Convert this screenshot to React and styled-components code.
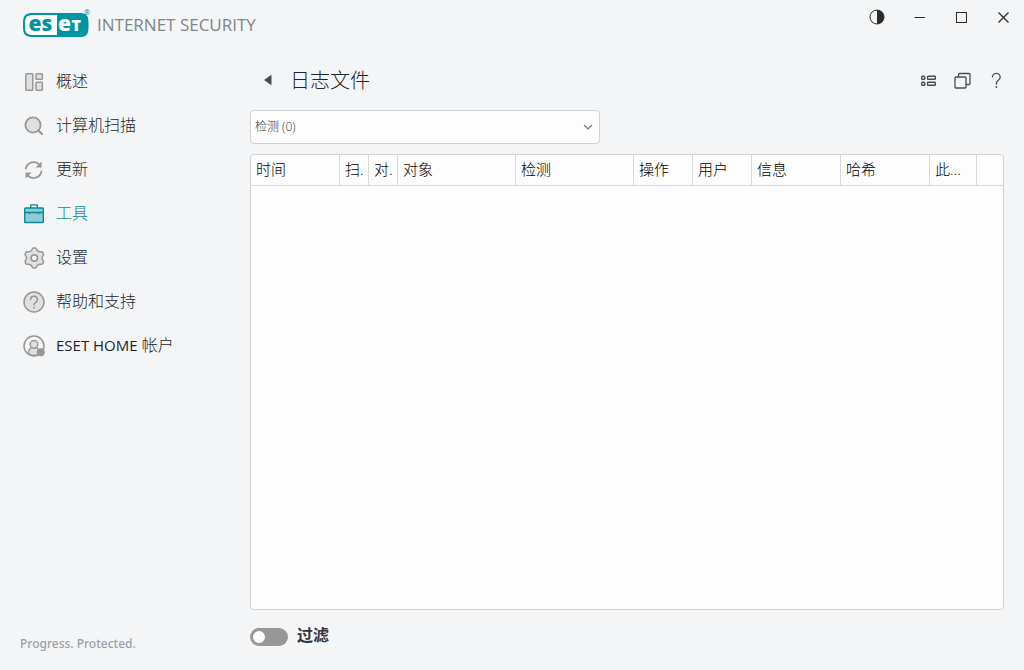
import React from "react";
import styled, { createGlobalStyle, css } from "styled-components";

const GlobalStyle = createGlobalStyle`
  * { box-sizing: border-box; }
  body {
    margin: 0;
    background: #f4f5f7;
    color: #3a3f47;
    font-family: "Open Sans", "Noto Sans CJK SC", sans-serif;
  }
  button { font: inherit; color: inherit; background: none; border: 0; padding: 0; cursor: pointer; }
`;

const Window = styled.div`
  min-height: 100vh;
  display: flex;
  flex-direction: column;
`;

const Header = styled.header`
  height: 50px;
  display: flex;
  justify-content: space-between;
  align-items: flex-start;
`;

const Brand = styled.div`
  display: flex;
  align-items: center;
  gap: 5px;
  padding: 7px 0 0 22px;
`;

const ProductName = styled.span`
  font-family: "Open Sans", sans-serif;
  font-size: 17px;
  line-height: 36px;
  color: #7e868c;
`;

const WindowControls = styled.div`
  display: flex;
`;

const WindowButton = styled.button`
  width: 42px;
  height: 34px;
  display: grid;
  place-items: center;
  color: #2b2b2b;
`;

const Body = styled.div`
  flex: 1;
  display: grid;
  grid-template-columns: 250px minmax(0, 1fr);
`;

const Sidebar = styled.aside`
  display: flex;
  flex-direction: column;
  justify-content: space-between;
  padding: 10px 0 16px 20px;
`;

const Nav = styled.nav`
  display: flex;
  flex-direction: column;
`;

const NavLink = styled.a`
  height: 44px;
  display: flex;
  align-items: center;
  gap: 8px;
  font-size: 16px;
  line-height: 24px;
  font-weight: 300;
  text-decoration: none;
  color: #20262e;
  ${(p) => p.$active && css`color: #0f8a92;`}
`;

const NavLabel = styled.span`
  padding-bottom: 2px;
`;

const Latin = styled.span`
  font-size: 15px;
  font-weight: 400;
`;

const Slogan = styled.p`
  margin: 0;
  font-family: "Noto Sans", sans-serif;
  font-size: 12px;
  line-height: 20px;
  font-weight: 500;
  color: #9a9fa4;
`;

const Main = styled.main`
  display: flex;
  flex-direction: column;
  padding-right: 20px;
`;

const Toolbar = styled.div`
  height: 60px;
  display: flex;
  align-items: center;
  margin-right: -9px;
`;

const BackButton = styled.button`
  width: 36px;
  height: 32px;
  display: grid;
  place-items: center;
`;

const Title = styled.h1`
  flex: 1;
  margin: 0 0 0 4px;
  padding-top: 2px;
  font-size: 20px;
  line-height: 30px;
  font-weight: 300;
  color: #20262e;
`;

const ToolButton = styled.button`
  width: 34px;
  height: 34px;
  display: grid;
  place-items: center;
  color: #43505a;
`;

const SelectBox = styled.div`
  width: 350px;
  max-width: 100%;
  display: grid;
  align-items: center;
  margin-bottom: 10px;
  > * { grid-area: 1 / 1; }
  > svg { justify-self: end; margin-right: 7px; pointer-events: none; }
`;

const LogSelect = styled.select`
  appearance: none;
  width: 100%;
  height: 34px;
  padding: 0 30px 2px 4px;
  border: 1px solid #cfd1d3;
  border-radius: 4px;
  background: #fdfdfd;
  font: 300 12px "Open Sans", "Noto Sans CJK SC", sans-serif;
  color: #333;
`;

const TablePanel = styled.div`
  flex: 1;
  overflow: hidden;
  border: 1px solid #cfd1d3;
  border-radius: 4px;
  background: #fdfdfd;
`;

const LogTable = styled.table`
  width: 100%;
  table-layout: fixed;
  border-collapse: separate;
  border-spacing: 0;
`;

const Column = styled.col`
  width: ${(p) => (p.$width ? `${p.$width}px` : "auto")};
`;

const HeadCell = styled.th`
  height: 31px;
  padding: 0 0 3px 5px;
  overflow: hidden;
  white-space: nowrap;
  text-align: left;
  font-size: 15px;
  line-height: 24px;
  font-weight: 300;
  color: #000;
  border-bottom: 1px solid #d6d8da;
  border-right: 1px solid #d6d8da;
  &:last-child { border-right: 0; }
`;

const FilterRow = styled.label`
  height: 60px;
  align-self: flex-start;
  display: flex;
  align-items: center;
  gap: 9px;
  padding-bottom: 10px;
  font-size: 16px;
  line-height: 24px;
  font-weight: 600;
  color: #333;
`;

const Toggle = styled.input`
  appearance: none;
  width: 38px;
  height: 18px;
  margin: 4px 0 0;
  padding: 3px;
  display: flex;
  border-radius: 9px;
  background: #979797;
  &::before {
    content: "";
    width: 12px;
    height: 12px;
    border-radius: 50%;
    background: #fff;
  }
  &:checked { background: #0096a1; justify-content: flex-end; }
`;

const Icon = ({ size = 28, children, ...rest }) => (
  <svg width={size} height={size} viewBox={`0 0 ${size} ${size}`} fill="none" aria-hidden="true" {...rest}>
    {children}
  </svg>
);

const G = { stroke: "#979797", strokeWidth: 1.8, fill: "#dfe0e2", strokeLinejoin: "round", strokeLinecap: "round" };

const OverviewIcon = () => (
  <Icon>
    <g {...G} strokeWidth="1.5">
      <rect x="5.8" y="5.8" width="7" height="16.4" rx="0.8" />
      <rect x="16" y="5.8" width="6.4" height="5.4" rx="0.8" />
      <rect x="16" y="14.2" width="6.4" height="8" rx="0.8" />
    </g>
  </Icon>
);
const ScanIcon = () => (
  <Icon>
    <circle cx="13" cy="13" r="7.6" {...G} />
    <path d="M18.6 18.6 22 22" {...G} strokeWidth="2.2" />
  </Icon>
);
const UpdateIcon = () => (
  <Icon>
    <g {...G} fill="none">
      <path d="M5.8 12.5A8 8 0 0 1 19.6 8.8" />
      <path d="M21.4 15.5A8 8 0 0 1 7.6 19.4" />
    </g>
    <path d="M21.6 5.6v6h-6z M5.6 22.6v-6h6z" fill="#979797" />
  </Icon>
);
const ToolsIcon = () => (
  <Icon>
    <g stroke="#0f8a92" strokeWidth="1.4" strokeLinejoin="round">
      <path d="M10.7 8V4.900h6.6V8" />
      <rect x="4.7" y="8" width="18.6" height="14.500" rx="0.8" fill="#8acdd4" />
      <path d="M5 12.5h18M9.5 12.5v1.8M18.5 12.5v1.8" />
    </g>
  </Icon>
);

// Outline with six evenly spaced, softly rounded teeth.
const gearPath =
  Array.from({ length: 72 }, (_, i) => {
    const angle = (i * Math.PI) / 36;
    const wave = Math.cos(6 * angle);
    const radius = 9 + 1.15 * Math.tanh(1.8 * wave);
    return `${i ? "L" : "M"}${(14.3 + radius * Math.sin(angle)).toFixed(2)} ${(14 - radius * Math.cos(angle)).toFixed(2)}`;
  }).join("") + "z";

const SettingsIcon = () => (
  <Icon>
    <path d={gearPath} {...G} strokeWidth="1.5" />
    <circle cx="14.3" cy="14" r="3.2" {...G} strokeWidth="1.7" fill="#f4f5f7" />
  </Icon>
);
const HelpIcon = () => (
  <Icon>
    <circle cx="14" cy="14" r="10" {...G} strokeWidth="1.5" />
    <path d="M10.6 11.6a3.4 3.4 0 1 1 5.1 2.9c-1.2.7-1.7 1.2-1.7 2.6" {...G} fill="none" strokeWidth="1.5" />
    <circle cx="14" cy="19.8" r="1" fill="#979797" />
  </Icon>
);
const AccountIcon = () => (
  <Icon>
    <circle cx="14" cy="14" r="10" {...G} strokeWidth="1.5" fill="#f4f5f7" />
    <path d="M8.4 21.5c0-3.4 1.5-5.3 3.4-5.9h4.4c1.9.6 3.4 2.5 3.4 5.9-3 2.6-8.2 2.6-11.2 0z" {...G} strokeWidth="1.4" />
    <circle cx="14" cy="12.4" r="3.8" {...G} strokeWidth="1.5" />
    <circle cx="20.8" cy="20.2" r="4" fill="#979797" />
  </Icon>
);

const Logo = () => (
  <svg width="70" height="32" viewBox="0 0 70 32" role="img" aria-label="ESET">
    <path d="M11 4H57C64 4 66.500 6 66.500 14v4c0 8-2.500 10-9.500 10H11C4 28 1 26 1 18v-4C1 6 4 4 11 4z" fill="#0096a1" />
    <path d="M11.500 6H35v20H11.500C5 26 3 24 3 18v-4c0-6 2-8 8.500-8z" fill="#fff" />
    <g fontFamily="Open Sans, sans-serif" fontWeight="800" fontSize="21">
      <text x="6.500" y="22" fill="#0096a1">es</text>
      <text x="36" y="22" fill="#fff">e</text>
      <text x="49.500" y="22" fontSize="16" fill="#fff">T</text>
    </g>
    <text x="62" y="6" fontFamily="Open Sans, sans-serif" fontSize="7" fontWeight="600" fill="#0096a1">®</text>
  </svg>
);

const navItems = [
  { label: "概述", icon: OverviewIcon },
  { label: "计算机扫描", icon: ScanIcon },
  { label: "更新", icon: UpdateIcon },
  { label: "工具", icon: ToolsIcon, active: true },
  { label: "设置", icon: SettingsIcon },
  { label: "帮助和支持", icon: HelpIcon },
  { latin: "ESET HOME", label: " 帐户", icon: AccountIcon },
];

const columns = [
  ["时间", 89],
  ["扫.", 29],
  ["对.", 29],
  ["对象", 118],
  ["检测", 118],
  ["操作", 59],
  ["用户", 59],
  ["信息", 89],
  ["哈希", 89],
  ["此...", 47],
  ["", 0],
];

export default function App() {
  return (
    <Window>
      <GlobalStyle />
      <Header>
        <Brand>
          <Logo />
          <ProductName>INTERNET SECURITY</ProductName>
        </Brand>
        <WindowControls>
          <WindowButton aria-label="对比度">
            <Icon size={16}>
              <circle cx="8" cy="8" r="7" stroke="currentColor" />
              <path d="M8 1a7 7 0 0 1 0 14z" fill="currentColor" />
            </Icon>
          </WindowButton>
          <WindowButton aria-label="最小化">
            <Icon size={12}><path d="M1.500 6.500h10.500" stroke="currentColor" /></Icon>
          </WindowButton>
          <WindowButton aria-label="最大化">
            <Icon size={12}><rect x="1.500" y="1.500" width="10" height="10" stroke="currentColor" /></Icon>
          </WindowButton>
          <WindowButton aria-label="关闭">
            <Icon size={12}><path d="M1.500 1.500l10 10M11.500 1.500l-10 10" stroke="currentColor" strokeWidth="1.3" /></Icon>
          </WindowButton>
        </WindowControls>
      </Header>
      <Body>
        <Sidebar>
          <Nav>
            {navItems.map(({ label, latin, icon: ItemIcon, active }) => (
              <NavLink key={label} href="#" $active={active} aria-current={active ? "page" : undefined}>
                <ItemIcon />
                <NavLabel>
                  {latin && <Latin>{latin}</Latin>}
                  {label}
                </NavLabel>
              </NavLink>
            ))}
          </Nav>
          <Slogan>Progress. Protected.</Slogan>
        </Sidebar>
        <Main>
          <Toolbar>
            <BackButton aria-label="返回">
              <Icon size={12}><path d="M9.500 0.800v10.400L2 6z" fill="#43505a" /></Icon>
            </BackButton>
            <Title>日志文件</Title>
            <ToolButton aria-label="列表">
              <Icon size={16}>
                <g stroke="currentColor" strokeWidth="1.4">
                  <rect x="1.700" y="4.300" width="3" height="3" rx="0.800" />
                  <rect x="7.500" y="4.300" width="7.800" height="3" rx="0.600" />
                  <rect x="1.700" y="10.300" width="3" height="3" rx="0.800" />
                  <rect x="7.500" y="10.300" width="7.800" height="3" rx="0.600" />
                </g>
              </Icon>
            </ToolButton>
            <ToolButton aria-label="新窗口">
              <Icon size={18}>
                <g stroke="currentColor" strokeWidth="1.300" strokeLinejoin="round">
                  <rect x="2" y="6" width="11" height="11" rx="1" />
                  <path d="M5.500 6V3.500a1 1 0 0 1 1-1H16a1 1 0 0 1 1 1v9a1 1 0 0 1-1 1h-3" />
                </g>
              </Icon>
            </ToolButton>
            <ToolButton aria-label="帮助">
              <Icon size={18}>
                <path d="M5.400 5.800a3.900 3.700 0 1 1 6.200 3.200C10 10.200 9.400 10.900 9.400 13" stroke="currentColor" strokeWidth="1.300" strokeLinecap="round" />
                <circle cx="9.400" cy="16" r="0.900" fill="currentColor" />
              </Icon>
            </ToolButton>
          </Toolbar>
          <SelectBox>
            <LogSelect aria-label="日志类型">
              <option>检测 (0)</option>
            </LogSelect>
            <Icon size={10}><path d="M1 3l4 4 4-4" stroke="#777" strokeWidth="1.200" /></Icon>
          </SelectBox>
          <TablePanel>
            <LogTable>
              <colgroup>
                {columns.map(([name, width]) => <Column key={name} $width={width} />)}
              </colgroup>
              <thead>
                <tr>
                  {columns.map(([name]) => <HeadCell key={name} scope="col">{name}</HeadCell>)}
                </tr>
              </thead>
            </LogTable>
          </TablePanel>
          <FilterRow>
            <Toggle type="checkbox" role="switch" />
            过滤
          </FilterRow>
        </Main>
      </Body>
    </Window>
  );
}
